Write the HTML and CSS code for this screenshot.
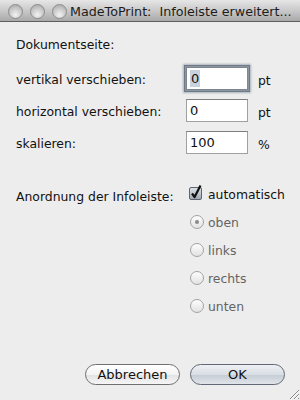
FILE: index.html
```html
<!DOCTYPE html>
<html lang="de">
<head>
  <meta charset="UTF-8">
  <title>MadeToPrint: Infoleiste erweitert</title>
  <link rel="stylesheet" href="styles.css">
</head>
<body>
  <div class="window">
    <div class="titlebar">
      <div class="lights">
        <span class="light"></span>
        <span class="light"></span>
        <span class="light"></span>
      </div>
      <div class="title">MadeToPrint:  Infoleiste erweitert...</div>
    </div>

    <div class="content">
      <div class="heading">Dokumentseite:</div>

      <div class="fields">
        <label class="field-label">vertikal verschieben:</label>
        <div class="field focused"><span class="selected-text">0</span></div>
        <span class="unit">pt</span>

        <label class="field-label">horizontal verschieben:</label>
        <div class="field">0</div>
        <span class="unit">pt</span>

        <label class="field-label">skalieren:</label>
        <div class="field">100</div>
        <span class="unit">%</span>
      </div>

      <div class="placement">
        <div class="placement-label">Anordnung der Infoleiste:</div>
        <div class="options">
          <div class="option">
            <svg class="checkbox" width="16" height="16" viewBox="0 0 16 16">
              <defs>
                <linearGradient id="cb" x1="0" y1="0" x2="0" y2="1">
                  <stop offset="0" stop-color="#dfe4ea"/>
                  <stop offset="1" stop-color="#9da6b1"/>
                </linearGradient>
              </defs>
              <rect x="1.5" y="3.5" width="12" height="12" rx="1.5" fill="url(#cb)" stroke="#5f6570"/>
              <path d="M4 9.5 L6.6 13 L12.5 1.5" fill="none" stroke="#111" stroke-width="2.2" stroke-linejoin="round"/>
            </svg>
            <span>automatisch</span>
          </div>
          <div class="option disabled"><span class="radio checked"></span><span>oben</span></div>
          <div class="option disabled"><span class="radio"></span><span>links</span></div>
          <div class="option disabled"><span class="radio"></span><span>rechts</span></div>
          <div class="option disabled"><span class="radio"></span><span>unten</span></div>
        </div>
      </div>

      <div class="buttons">
        <button class="btn">Abbrechen</button>
        <button class="btn default">OK</button>
      </div>
    </div>

    <svg class="grip" width="14" height="14" viewBox="0 0 14 14">
      <path d="M13 4 L4 13 M13 8 L8 13 M13 12 L12 13" stroke="#8a8a8a" stroke-width="1"/>
      <path d="M13 5 L5 13 M13 9 L9 13" stroke="#ffffff" stroke-width="1"/>
    </svg>
  </div>
</body>
</html>
```

FILE: styles.css
```css
body {
  margin: 0;
  background: #ededed;
  font-family: 'DejaVu Sans', 'Liberation Sans', sans-serif;
  font-size: 12.4px;
  color: #111;
}

.window {
  position: relative;
  width: 300px;
  height: 400px;
  display: flex;
  flex-direction: column;
  background: #ededed;
  overflow: hidden;
}

.titlebar {
  height: 21px;
  display: flex;
  align-items: center;
  background: linear-gradient(#e6e6e6, #c9c9c9 50%, #a9a9a9);
  border-bottom: 1px solid #5e5e5e;
}

.lights {
  display: flex;
  gap: 7px;
  padding-left: 8px;
  padding-top: 1px;
}

.light {
  width: 13px;
  height: 13px;
  border-radius: 50%;
  border: 1px solid #8c8c8c;
  background: radial-gradient(circle at 50% 75%, #f2f2f2, #cfcfcf 45%, #a4a4a4);
}

.title {
  margin-left: 3px;
  white-space: pre;
  font-size: 12.7px;
  color: #1c1c1c;
  padding-top: 1px;
}

.content {
  flex: 1;
  display: flex;
  flex-direction: column;
  padding: 15px 15px 15px 16px;
}

.heading {
  line-height: 16px;
}

.fields {
  margin-top: 14px;
  display: grid;
  grid-template-columns: 170px 62px auto;
  row-gap: 9px;
  align-items: center;
}

.field-label {
  padding-top: 2px;
}

.field {
  height: 21px;
  border: 1px solid #a0a0a0;
  border-top-color: #7e7e7e;
  background: #fff;
  padding-left: 3px;
  line-height: 21px;
  font-size: 13px;
}

.field.focused {
  box-shadow: 0 0 0 1px #8b95a0, 0 0 0 2px #6f7a86, 0 0 2px 3px #a9b2bc;
  border-color: #7d8792;
}

.selected-text {
  background: #c9d3df;
  padding: 1px 1px;
}

.unit {
  padding-top: 3px;
  padding-left: 10px;
}

.placement {
  margin-top: 26px;
  display: grid;
  grid-template-columns: 172px auto;
}

.placement-label {
  line-height: 28px;
  padding-top: 3px;
}

.options {
  display: flex;
  flex-direction: column;
}

.option {
  height: 28px;
  display: flex;
  align-items: center;
  gap: 4px;
}

.checkbox {
  margin-top: -4px;
}

.option.disabled {
  color: #646464;
  gap: 4px;
  padding-left: 2px;
}

.radio {
  width: 12px;
  height: 12px;
  border-radius: 50%;
  border: 1px solid #a3a3a3;
  background: linear-gradient(#fdfdfd, #e2e2e2);
  display: flex;
  align-items: center;
  justify-content: center;
}

.radio.checked::after {
  content: "";
  width: 4px;
  height: 4px;
  border-radius: 50%;
  background: #8a8a8a;
}

.buttons {
  margin-top: auto;
  display: flex;
  justify-content: flex-end;
  gap: 10px;
}

.btn {
  width: 95px;
  height: 21px;
  border-radius: 11px;
  border: 1px solid #6e6e6e;
  background: linear-gradient(#ffffff, #f3f3f3 50%, #e2e2e2 51%, #f6f6f6);
  font-family: 'DejaVu Sans', 'Liberation Sans', sans-serif;
  font-size: 13px;
  color: #111;
  padding: 0;
}

.btn.default {
  border-color: #5f6874;
  background: linear-gradient(#eef1f4, #d9dee4 50%, #c5ccd4 51%, #dfe4e9);
}

.grip {
  position: absolute;
  right: 0;
  bottom: 0;
}
```
